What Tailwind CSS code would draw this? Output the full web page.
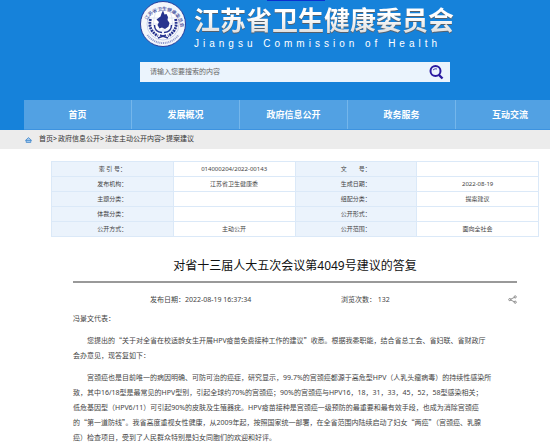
<!DOCTYPE html>
<html lang="zh-CN">
<head>
<meta charset="utf-8">
<meta name="viewport" content="width=device-width, initial-scale=1">
<title>江苏省卫生健康委员会</title>
<script src="https://cdn.jsdelivr.net/npm/@tailwindcss/browser@4"></script>
</head>
<body class="bg-white font-['Noto_Sans','Noto_Sans_CJK_SC',sans-serif] text-[#444] overflow-x-hidden">
<header class="relative bg-[#1682da]">
  <div class="absolute top-0 left-[267px] h-px w-[58px] bg-[#0a2fd0]"></div>
  <div class="flex h-[100px] flex-col pl-[140px] pr-[100px]">
    <a href="#" class="flex h-[62px] gap-2 pt-px">
      <svg class="size-[46px] shrink-0" viewBox="0 0 46 46" aria-hidden="true">
        <circle cx="23" cy="23" r="22.5" fill="#f4f6fb" stroke="#2b3f9c" stroke-width="1"/>
        <circle cx="23" cy="23" r="16" fill="#fff" stroke="#8ea3d6" stroke-width=".5"/>
        <defs><path id="ring" d="M5.500 27A17.500 17.500 0 1 1 40.500 27"/></defs>
        <text font-size="4.600" font-weight="500" fill="#3a4699"><textPath href="#ring" startOffset="8">江苏省卫生健康委员会</textPath></text>
        <path d="M7.500 34A19 19 0 0 0 38.500 34" fill="none" stroke="#8c97cc" stroke-width="2" stroke-dasharray="1 .8"/>
        <g fill="none" stroke="#c3cfea" stroke-width=".5"><path d="M10 17h26M9 23h28M10 29h26M23 8v30M16 10q-5 13 0 26M30 10q5 13 0 26"/></g>
        <path d="M23 9.500l1.500 4 2-.5 1.500 3-.5 3 2 3-1 3.500-3.500 2.500-3-1.500-2.500 1-2-3.500 1.500-3-2.500-2.500 4-3 1-3z" fill="#27348f"/>
        <path d="M10.500 18q-3 11 7.500 17M35.500 18q3 11-7.500 17" fill="none" stroke="#27348f" stroke-width="2.800" stroke-dasharray="2 .8"/>
        <path d="M14.500 24q0 7 7.500 7.500M31.500 24q0 7-7.500 7.500M18 37l8-3M28 37l-8-3" fill="none" stroke="#27348f" stroke-width="1.400"/>
      </svg>
      <span class="flex flex-col whitespace-nowrap">
        <span class="h-[36px] bg-linear-to-b from-white from-40% to-[#d8d8d8] bg-clip-text text-[26px] leading-[38px] font-bold text-transparent drop-shadow-[0_1px_0_#55606c]">江苏省卫生健康委员会</span>
        <span class="font-['Liberation_Sans',sans-serif] text-[10px] leading-[14px] tracking-[4px] text-white">Jiangsu Commission of Health</span>
      </span>
    </a>
    <form class="flex h-5 items-center bg-[#ebf4fd] pr-[6px] pl-[10px]">
      <input type="search" aria-label="搜索" placeholder="请输入您要搜索的内容" class="min-w-0 flex-1 bg-transparent text-[7px] leading-5 text-[#555] outline-none placeholder:text-[#666]">
      <button type="button" aria-label="搜索"><svg class="size-4" viewBox="0 0 16 16" fill="none" stroke="#2a1aa0"><circle cx="7.500" cy="7" r="5" stroke-width="2"/><path d="M11 11l3.500 3.500" stroke-width="2.400"/><path d="M5 6q2-2 4-1" stroke-width=".8"/></svg></button>
    </form>
  </div>
  <nav class="ml-6 flex h-[30px] overflow-hidden border-b border-[#3d93e0] bg-[#52a1e3] text-[9px] font-bold text-white" aria-label="主导航">
    <a href="#" class="flex w-[108px] shrink-0 items-center justify-center border-r border-[#74b6eb]">首页</a>
    <a href="#" class="flex w-[108px] shrink-0 items-center justify-center border-r border-[#74b6eb]">发展概况</a>
    <a href="#" class="flex w-[108px] shrink-0 items-center justify-center border-r border-[#74b6eb]">政府信息公开</a>
    <a href="#" class="flex w-[108px] shrink-0 items-center justify-center border-r border-[#74b6eb]">政务服务</a>
    <a href="#" class="flex w-[108px] shrink-0 items-center justify-center">互动交流</a>
  </nav>
</header>
<nav class="flex h-[19px] items-center bg-[#ececec] pl-[25px] text-[7px] text-[#333]" aria-label="面包屑">
  <svg class="mr-[7px] h-[6px] w-[7px]" viewBox="0 0 7 6" fill="#a9cdef" stroke="#3f86cc" stroke-width=".8"><path d="M.5 3.400L3.500.6l3 2.800zM1.200 3.400v2h4.600v-2"/></svg>
  <a href="#">首页</a><span class="mr-px">&gt;</span><a href="#">政府信息公开</a><span class="mr-px">&gt;</span><a href="#">法定主动公开内容</a><span class="mr-px">&gt;</span><a href="#">提案建议</a>
</nav>
<main>
  <div class="pt-3 pr-[11px] pl-[51px]">
    <table class="w-full table-fixed border-collapse text-center text-[6px] leading-[14px] [&_td]:h-[15px] [&_td]:border [&_td]:border-[#dbe9f8] [&_th]:h-[15px] [&_th]:border [&_th]:border-[#dbe9f8] [&_th]:bg-[#ebf3fc] [&_th]:font-normal">
      <tbody>
      <tr><th scope="row">索 引 号：</th><td>014000204/2022-00143</td><th scope="row">文　　号：</th><td></td></tr>
      <tr><th scope="row">发布机构：</th><td>江苏省卫生健康委</td><th scope="row">生成日期：</th><td>2022-08-19</td></tr>
      <tr><th scope="row">主题分类：</th><td></td><th scope="row">组配分类：</th><td>提案建议</td></tr>
      <tr><th scope="row">体裁分类：</th><td></td><th scope="row">公开形式：</th><td></td></tr>
      <tr><th scope="row">公开方式：</th><td>主动公开</td><th scope="row">公开范围：</th><td>面向全社会</td></tr>
      </tbody>
    </table>
  </div>
  <article class="pr-[33px] pl-[73px] text-[7px] leading-[15px]">
    <h1 class="border-b-2 border-[#999] pt-[18px] pb-1 text-center text-[12px] leading-[22px] text-[#111]">对省十三届人大五次会议第4049号建议的答复</h1>
    <div class="flex h-7 items-center pt-1">
      <span class="ml-[77px] w-[191px]">发布日期：2022-08-19 16:37:34</span>
      <span>浏览次数： 132</span>
      <button type="button" aria-label="分享" class="ml-auto"><svg class="size-[9px]" viewBox="0 0 9 9" fill="none" stroke="#777" stroke-width=".8"><path d="M2.500 4.300l4-2M2.500 4.900l4 2"/><circle cx="1.800" cy="4.600" r="1.100"/><circle cx="7.200" cy="1.900" r="1.100"/><circle cx="7.200" cy="7.200" r="1.100"/></svg></button>
    </div>
    <div class="flex flex-col gap-[7px] whitespace-nowrap [&_q]:font-['Noto_Sans_CJK_SC',sans-serif] [&_q]:[quotes:none] [&_i]:font-['Noto_Sans_CJK_SC',sans-serif] [&_i]:not-italic">
      <p>冯景文代表：</p>
      <p class="indent-[14px]">您提出的<i>“</i>关于对全省在校适龄女生开展HPV疫苗免费接种工作的建议<i>”</i>收悉。根据我委职能，结合省总工会、省妇联、省财政厅<br>会办意见，现答复如下：</p>
      <p class="indent-[14px]">宫颈癌也是目前唯一的病因明确、可防可治的癌症，研究显示，99.7%的宫颈癌都源于高危型HPV（人乳头瘤病毒）的持续性感染所<br>致，其中16/18型是最常见的HPV型别，引起全球约70%的宫颈癌；90%的宫颈癌与HPV16，18，31，33，45，52，58型感染相关；<br>低危基因型（HPV6/11）可引起90%的皮肤及生殖器疣。HPV疫苗接种是宫颈癌一级预防的最重要和最有效手段，也成为消除宫颈癌<br>的<i>“</i>第一道防线<i>”</i>。我省高度重视女性健康，从2009年起，按照国家统一部署，在全省范围内陆续启动了妇女<i>“</i>两癌<i>”</i>（宫颈癌、乳腺<br>癌）检查项目，受到了人民群众特别是妇女同胞们的欢迎和好评。</p>
    </div>
  </article>
</main>
</body>
</html>
